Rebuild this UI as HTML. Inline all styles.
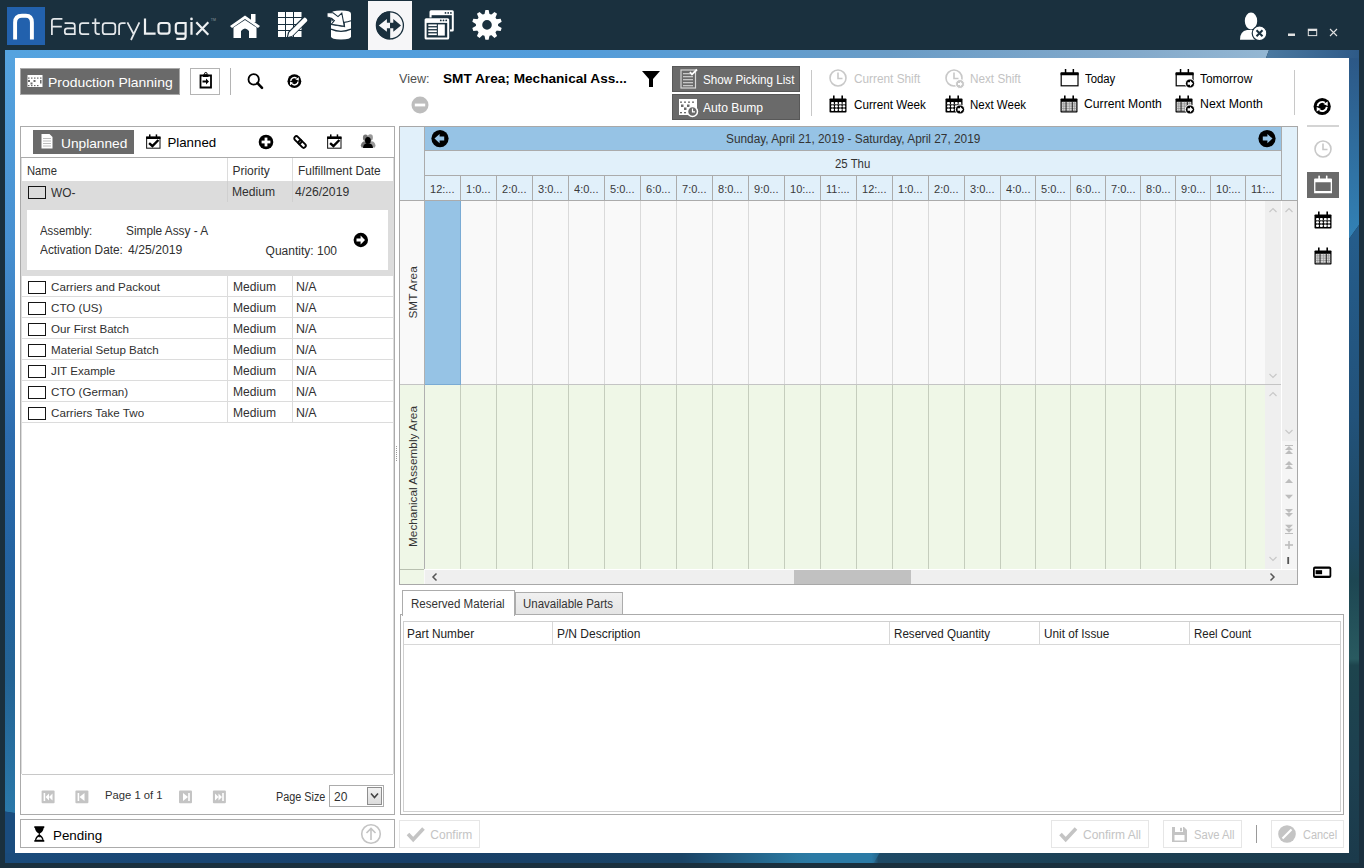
<!DOCTYPE html>
<html><head><meta charset="utf-8">
<style>
*{margin:0;padding:0;box-sizing:border-box}
html,body{width:1364px;height:868px;overflow:hidden}
body{background:#1a303e;font-family:"Liberation Sans",sans-serif;font-size:12px;color:#303030;position:relative}
.a{position:absolute}
.t{position:absolute;white-space:nowrap;line-height:1}
svg{position:absolute;overflow:visible}
</style></head><body>


<svg width="0" height="0" style="position:absolute">
 <defs>
  <g id="calO">
   <rect x="1.2" y="4.5" width="16.8" height="12.3" fill="none" stroke="#000" stroke-width="1.2"/>
   <rect x="0.6" y="3.3" width="18" height="3" rx="0.5" fill="#000"/>
   <rect x="4.8" y="0" width="1.5" height="5.5" fill="#000"/><rect x="12.6" y="0" width="1.5" height="5.5" fill="#000"/>
  </g>
  <g id="calW">
   <rect x="0.5" y="3.5" width="17" height="14" rx="0.8" fill="#000"/>
   <rect x="4" y="0.5" width="1.6" height="5" fill="#000"/><rect x="12.4" y="0.5" width="1.6" height="5" fill="#000"/>
   <g fill="#fff">
    <rect x="2" y="7" width="3" height="2.3" rx="1"/><rect x="5.9" y="7" width="3" height="2.3" rx="1"/><rect x="9.8" y="7" width="3" height="2.3" rx="1"/><rect x="13.5" y="7" width="2.8" height="2.3" rx="1"/>
    <rect x="2" y="10.2" width="3" height="2.3" rx="1"/><rect x="5.9" y="10.2" width="3" height="2.3" rx="1"/><rect x="9.8" y="10.2" width="3" height="2.3" rx="1"/><rect x="13.5" y="10.2" width="2.8" height="2.3" rx="1"/>
    <rect x="2" y="13.4" width="3" height="2.5" rx="1"/><rect x="5.9" y="13.4" width="3" height="2.5" rx="1"/><rect x="9.8" y="13.4" width="3" height="2.5" rx="1"/><rect x="13.5" y="13.4" width="2.8" height="2.5" rx="1"/>
    <rect x="1.7" y="9.6" width="14.6" height="0.4" opacity="0.6"/>
   </g>
  </g>
  <g id="calM">
   <rect x="0.5" y="3.5" width="17" height="14" rx="0.8" fill="#000"/>
   <rect x="4" y="0.5" width="1.6" height="5" fill="#000"/><rect x="12.4" y="0.5" width="1.6" height="5" fill="#000"/>
   <rect x="1.7" y="6.8" width="14.6" height="9.5" fill="#d4d4d4"/>
   <g fill="#888">
    <rect x="1.7" y="8.6" width="14.6" height="0.6"/><rect x="1.7" y="10.8" width="14.6" height="0.6"/><rect x="1.7" y="13" width="14.6" height="0.6"/><rect x="1.7" y="15" width="14.6" height="0.6"/>
    <rect x="3.6" y="6.8" width="0.5" height="9.5"/><rect x="9.2" y="6.8" width="0.5" height="9.5"/><rect x="14" y="6.8" width="0.5" height="9.5"/>
   </g>
   <rect x="5.6" y="6.8" width="0.9" height="9.5" fill="#111"/><rect x="11.8" y="6.8" width="0.9" height="9.5" fill="#111"/>
  </g>
  <g id="arr">
   <circle cx="15" cy="14.5" r="4.6" fill="#000" stroke="#fff" stroke-width="1"/>
   <path d="M12.6 13.3 H15 V11.5 L18 14.5 L15 17.5 V15.7 H12.6 Z" fill="#fff"/>
  </g>
  <g id="clk">
   <circle cx="9" cy="9" r="8" fill="none" stroke="#c8c8c8" stroke-width="1.6"/>
   <path d="M9 3.5 V9.5 H13.5" fill="none" stroke="#c8c8c8" stroke-width="1.6"/>
  </g>
  <g id="sync">
   <circle r="8.6" fill="#000"/>
   <path d="M-4.6 -0.4 A4.6 4.6 0 0 1 2.6 -3.8 M4.6 0.4 A4.6 4.6 0 0 1 -2.6 3.8" fill="none" stroke="#fff" stroke-width="1.9"/>
   <path d="M5.5 -5 L5.5 -0.5 L1.2 -2.4 Z M-5.5 5 L-5.5 0.5 L-1.2 2.4 Z" fill="#fff"/>
  </g>
 </defs>
</svg>

<!-- HEADER -->
<div class="a" style="left:7px;top:7px;width:38px;height:38px;background:#2261ad"></div>
<svg style="left:7px;top:7px" width="38" height="38"><path d="M8.1 32.6 V15.5 Q8.1 8.7 15 8.7 H18.9 Q24.9 8.7 24.9 15.5 V32.6" fill="none" stroke="#fff" stroke-width="3.9"/></svg>
<svg style="left:0;top:0" width="225" height="45">
 <g fill="none" stroke="#e4e7ea" stroke-width="1.75">
  <path d="M51.9 35 V21 Q51.9 18.9 54 18.9 H62.4 M51.9 26.5 H61.8"/>
  <path d="M64.6 23.1 H72.3 Q74.8 23.1 74.8 25.6 V35 M74.8 28.4 H67.2 Q64.8 28.4 64.8 30.8 V31.9 Q64.8 34.2 67.2 34.2 H74.8"/>
  <path d="M89.2 23.1 H82.4 Q79.9 23.1 79.9 25.8 V31.5 Q79.9 34.2 82.4 34.2 H89.2"/>
  <path d="M95.4 18.6 V31.6 Q95.4 34.2 98 34.2 H99.8 M91.9 23.1 H99.8"/>
  <path d="M105.3 23.1 H112.6 Q115.3 23.1 115.3 26 V31.4 Q115.3 34.2 112.6 34.2 H105.3 Q102.7 34.2 102.7 31.4 V26 Q102.7 23.1 105.3 23.1 Z"/>
  <path d="M119.1 35 V26 Q119.1 23.1 122 23.1 H125.6"/>
  <path d="M127.4 22.3 L133.6 34 M139.4 22.3 L131 40"/>
 </g>
 <g fill="none" stroke="#eef0f2" stroke-width="2.2">
  <path d="M145 18.6 V33.6 H155.6"/>
  <path d="M161 23 H167 Q169.5 23 169.5 25.6 V31 Q169.5 33.6 167 33.6 H161 Q158.5 33.6 158.5 31 V25.6 Q158.5 23 161 23 Z"/>
  <path d="M178.4 23 H185.6 V36.4 Q185.6 38.9 183 38.9 H176.3 M185.6 33.6 H178.4 Q175.8 33.6 175.8 31 V25.6 Q175.8 23 178.4 23"/>
  <path d="M191.5 22 V34.7 M196.3 22.3 L208.3 34.7 M208.3 22.3 L196.3 34.7"/>
 </g>
 <circle cx="191.5" cy="18.9" r="1.35" fill="#eef0f2"/>
 <text x="210.8" y="20.5" font-family="Liberation Sans" font-size="3.5" fill="#8d979f">TM</text>
</svg>

<!-- selected nav tab -->
<div class="a" style="left:368px;top:1px;width:44px;height:49px;background:#f6f6f8"></div>


<!-- nav icons -->
<svg style="left:0;top:0" width="520" height="50">
 <!-- home -->
 <path d="M230 26 L245 15.5 L260 26 L258 28 L245 19 L232 28 Z" fill="#fff"/>
 <rect x="251" y="14" width="4.5" height="8" fill="#fff"/>
 <path d="M233.5 27.5 L245 20 L256.5 27.5 V38 H249 V31 Q245 26 241 31 V38 H233.5 Z" fill="#fff"/>
 <!-- grid edit -->
 <g fill="#fff">
  <rect x="278" y="12" width="7" height="5"/><rect x="286" y="12" width="7" height="5"/><rect x="294" y="12" width="7.5" height="5"/>
  <rect x="278" y="18" width="7" height="6"/><rect x="286" y="18" width="7" height="6"/><rect x="294" y="18" width="7.5" height="6"/>
  <rect x="278" y="25" width="7" height="5"/><rect x="286" y="25" width="7" height="5"/><rect x="294" y="25" width="7.5" height="5"/>
  <rect x="278" y="31" width="7" height="6"/><rect x="286" y="31" width="7" height="6"/><rect x="294" y="31" width="7.5" height="6"/>
 </g>
 <path d="M286.5 38.5 L288 32 L303 17 Q304.8 15.3 306.5 17 L307.8 18.3 Q309.4 20 307.8 21.6 L292.8 36.6 Z" fill="#1a303e"/>
 <path d="M288 37 L289.2 32.6 L303.6 18.2 Q304.8 17 306 18.2 L306.8 19 Q308 20.2 306.8 21.4 L292.4 35.8 Z" fill="#fff"/>
 <!-- database -->
 <path d="M331 13.5 Q331 10.4 341 10.4 Q351 10.4 351 13.5 V36.5 Q351 39.4 341 39.4 Q331 39.4 331 36.5 Z" fill="#fff"/>
 <path d="M331 29.2 Q341 33.5 351 29.2" fill="none" stroke="#1a303e" stroke-width="1.4"/>
 <path d="M331 24.4 L344.5 26.6 L344 22.3 Q348 22 351 20.8" fill="none" stroke="#1a303e" stroke-width="1.2"/>
 <path d="M327 12.6 L333 12.8 L338 16.6 L341.8 13 L344.3 26.4 L331.4 24.2 L334.3 20.6 Q332 19.5 331.5 18.5 Q329 17 327 17 Z" fill="#fff" stroke="#1a303e" stroke-width="1.1" stroke-linejoin="miter"/>
 <path d="M331.2 17.5 L333.8 19.6 L331.5 21.8 Z" fill="#1a303e"/>
 <!-- selected tab icon -->
 <circle cx="389.9" cy="25.4" r="13.5" fill="#f6f6f8" stroke="#1a303e" stroke-width="1.3"/>
 <path d="M390.2 11.3 A14.1 14.1 0 0 0 390.2 39.5 Z" fill="#1a303e"/>
 <path d="M378.8 25.4 L386.9 19 V22.7 H390.2 V28.2 H386.9 V31.8 Z" fill="#f6f6f8"/>
 <path d="M401 25.4 L393.3 19 V22.7 H390 V28.2 H393.3 V31.8 Z" fill="#1a303e"/>
 <!-- windows -->
 <rect x="429.5" y="10.2" width="24.3" height="21.2" rx="1.5" fill="#fff"/>
 <rect x="431.6" y="15.2" width="20.2" height="14.2" fill="#1a303e"/>
 <g fill="#1a303e"><circle cx="445.5" cy="12.9" r="0.9"/><circle cx="448.2" cy="12.9" r="0.9"/><circle cx="450.9" cy="12.9" r="0.9"/></g>
 <rect x="423.8" y="17.4" width="26.2" height="22.9" rx="1.8" fill="#1a303e"/>
 <rect x="424.6" y="18.2" width="24.6" height="21.3" rx="1.5" fill="#fff"/>
 <rect x="426.6" y="22.9" width="20.6" height="14.6" fill="#1a303e"/>
 <g fill="#1a303e"><circle cx="440.8" cy="20.4" r="0.9"/><circle cx="443.5" cy="20.4" r="0.9"/><circle cx="446.2" cy="20.4" r="0.9"/></g>
 <g fill="#fff"><rect x="428.3" y="24.4" width="8.5" height="1.7"/><rect x="428.3" y="27.4" width="8.5" height="1.7"/><rect x="428.3" y="30.4" width="8.5" height="1.7"/><rect x="428.3" y="33.4" width="8.5" height="1.7"/><rect x="437.9" y="24.4" width="6.9" height="11.2"/></g>
 <!-- gear -->
 <path d="M484.30 14.90 L485.40 10.00 L488.60 10.00 L489.70 14.90 Z M490.69 15.22 L494.46 11.91 L497.05 13.79 L495.06 18.40 Z M495.68 19.24 L500.68 18.77 L501.67 21.82 L497.34 24.38 Z M497.34 25.42 L501.67 27.98 L500.68 31.03 L495.68 30.56 Z M495.06 31.40 L497.05 36.01 L494.46 37.89 L490.69 34.58 Z M489.70 34.90 L488.60 39.80 L485.40 39.80 L484.30 34.90 Z M483.31 34.58 L479.54 37.89 L476.95 36.01 L478.94 31.40 Z M478.32 30.56 L473.32 31.03 L472.33 27.98 L476.66 25.42 Z M476.66 24.38 L472.33 21.82 L473.32 18.77 L478.32 19.24 Z M478.94 18.40 L476.95 13.79 L479.54 11.91 L483.31 15.22 Z " fill="#fff"/>
 <circle cx="487" cy="24.9" r="7.95" fill="none" stroke="#fff" stroke-width="6.3"/>
</svg>
<!-- window controls -->
<svg style="left:1230px;top:0" width="134" height="50">
 <ellipse cx="21" cy="21" rx="6.2" ry="8.4" fill="#fff"/>
 <path d="M10 39.8 Q10 31 17 30 L21 30 L25 30 Q30 31 30 39.8 Z" fill="#fff"/>
 <circle cx="29.5" cy="33.3" r="7.3" fill="#fff" stroke="#1a303e" stroke-width="1.2"/>
 <path d="M26.5 30.3 L32.5 36.3 M32.5 30.3 L26.5 36.3" stroke="#1a303e" stroke-width="2"/>
 <rect x="58" y="33.5" width="7" height="2.5" fill="#e2e2e2"/>
 <rect x="78.3" y="29.2" width="8.4" height="6.4" fill="none" stroke="#e2e2e2" stroke-width="1"/>
 <rect x="78" y="29" width="9" height="2" fill="#e2e2e2"/>
 <path d="M100 29 L107 36 M107 29 L100 36" stroke="#e2e2e2" stroke-width="1.1"/>
</svg>

<!-- FRAME -->
<svg style="left:0;top:0" width="1364" height="868">
 <defs>
  <linearGradient id="gt1" x1="5" x2="1269" y1="0" y2="0" gradientUnits="userSpaceOnUse">
   <stop offset="0" stop-color="#55a3df"/><stop offset="0.45" stop-color="#529cda"/><stop offset="0.7" stop-color="#6a9cc6"/><stop offset="0.9" stop-color="#84aacb"/><stop offset="1" stop-color="#94b7d3"/>
  </linearGradient>
  <linearGradient id="gt2" x1="1266" x2="1359" y1="0" y2="0" gradientUnits="userSpaceOnUse">
   <stop offset="0" stop-color="#4b79a0"/><stop offset="1" stop-color="#2e5a88"/>
  </linearGradient>
  <linearGradient id="gr1" x1="0" x2="0" y1="50" y2="239" gradientUnits="userSpaceOnUse">
   <stop offset="0" stop-color="#2c5684"/><stop offset="1" stop-color="#3282b6"/>
  </linearGradient>
  <linearGradient id="gr2" x1="0" x2="0" y1="225" y2="863" gradientUnits="userSpaceOnUse">
   <stop offset="0" stop-color="#255d8c"/><stop offset="0.3" stop-color="#22527a"/><stop offset="0.5" stop-color="#1e4860"/><stop offset="0.556" stop-color="#1d4652"/><stop offset="0.68" stop-color="#295a60"/><stop offset="0.69" stop-color="#1d444d"/><stop offset="0.85" stop-color="#1d4050"/><stop offset="1" stop-color="#1b3a4b"/>
  </linearGradient>
  <linearGradient id="gl1" x1="0" x2="0" y1="58" y2="812" gradientUnits="userSpaceOnUse">
   <stop offset="0" stop-color="#55a3df"/><stop offset="0.25" stop-color="#468fd0"/><stop offset="0.5" stop-color="#2c6cae"/><stop offset="0.68" stop-color="#2262a0"/><stop offset="0.82" stop-color="#236394"/><stop offset="1" stop-color="#2a78a9"/>
  </linearGradient>
  <linearGradient id="gb" x1="5" x2="1359" y1="0" y2="0" gradientUnits="userSpaceOnUse">
   <stop offset="0" stop-color="#1a4b7b"/><stop offset="0.3" stop-color="#183f68"/><stop offset="0.5" stop-color="#1a4466"/><stop offset="0.585" stop-color="#2a78a0"/><stop offset="0.6" stop-color="#2c7ba6"/><stop offset="0.64" stop-color="#2c7aa5"/><stop offset="0.645" stop-color="#1e4a66"/><stop offset="0.8" stop-color="#1c4054"/><stop offset="1" stop-color="#1b3a4b"/>
  </linearGradient>
 </defs>
 <path d="M5 50 H1269 L1266 58 H5 Z" fill="url(#gt1)"/>
 <path d="M1269 50 H1359 V58 H1266 Z" fill="url(#gt2)"/>
 <path d="M1349 58 H1359 V225 L1349 239 Z" fill="url(#gr1)"/>
 <path d="M1349 239 L1359 225 V863 H1349 Z" fill="url(#gr2)"/>
 <path d="M5 58 H15 V813 L5 811.5 Z" fill="#2a76a8"/>
 <path d="M5 58 H15 V813 L5 811.5 Z" fill="url(#gl1)"/>
 <path d="M5 811.5 L15 813 V853 H5 Z" fill="#1a4c7e"/>
 <path d="M5 853 H1349 V863 H5 Z" fill="url(#gb)"/>
 <path d="M804.5 863 L814 853 H879.6 L873.7 863 Z" fill="#2c7aa5" opacity="0.6"/>
</svg>
<div class="a" style="left:15px;top:58px;width:1334px;height:795px;background:#fff"></div>


<!-- TOOLBAR -->
<div class="a" style="left:20px;top:68px;width:160px;height:27px;background:#6a6a6a;border:1px solid #a8a8a8"></div>
<svg style="left:27px;top:75px" width="16" height="13">
 <rect x="0.5" y="0" width="15" height="12" fill="#fff"/>
 <g fill="#6a6a6a">
  <rect x="1" y="2.5" width="1.5" height="1.2"/><rect x="4" y="2.5" width="1.5" height="1.2"/><rect x="7" y="2.5" width="1.5" height="1.2"/><rect x="10" y="2.5" width="1.5" height="1.2"/><rect x="13" y="2.5" width="1.5" height="1.2"/>
  <rect x="1" y="10" width="1.5" height="1.2"/><rect x="4" y="10" width="1.5" height="1.2"/><rect x="7" y="10" width="1.5" height="1.2"/><rect x="10" y="10" width="1.5" height="1.2"/>
  <rect x="1" y="5" width="2" height="2"/><rect x="6.5" y="5" width="2" height="2"/><rect x="3.5" y="7.5" width="2" height="2"/><rect x="13" y="5" width="1.5" height="3.5"/>
 </g>
</svg>
<div class="t" style="left:48.20px;top:75.63px;font-size:13.2px;color:#fff;transform:scaleX(1.056);transform-origin:0 0">Production Planning</div>
<div class="a" style="left:190px;top:68px;width:30px;height:27px;border:1px solid #b4b4b4;background:#fff"></div>
<svg style="left:199px;top:72px" width="14" height="18">
 <path d="M1.5 3.5 H12 V15.5 H1.5 Z" fill="none" stroke="#000" stroke-width="1.8"/>
 <path d="M4 2.5 H9.5 V5 H4 Z" fill="#000"/><circle cx="6.8" cy="1.8" r="1.3" fill="none" stroke="#000" stroke-width="1"/>
 <path d="M3.5 8.5 H7 V6.5 L10 9.5 L7 12.5 V10.5 H3.5 Z" fill="#000"/>
</svg>
<div class="a" style="left:230px;top:68px;width:1px;height:27px;background:#b4b4b4"></div>
<svg style="left:244px;top:70px" width="22" height="22">
 <circle cx="9.7" cy="9.4" r="5.2" fill="none" stroke="#000" stroke-width="1.8"/>
 <path d="M13.5 13.2 L18 17.8" stroke="#000" stroke-width="2.6" stroke-linecap="round"/>
</svg>
<svg style="left:280px;top:67px" width="30" height="30"><use href="#sync" transform="translate(14.4 14.2) scale(0.8)"/></svg>

<div class="t" style="left:399.10px;top:71.56px;font-size:13.4px;color:#505050;transform:scaleX(0.939);transform-origin:0 0">View:</div>
<div class="t" style="left:443.40px;top:72.37px;font-size:13.5px;font-weight:bold;color:#000;transform:scaleX(1.009);transform-origin:0 0">SMT Area; Mechanical Ass...</div>
<svg style="left:641px;top:70px" width="20" height="18">
 <path d="M1 1 H19 L12 9 V17 L8 17 V9 Z" fill="#000"/>
</svg>
<svg style="left:410px;top:95px" width="20" height="20">
 <circle cx="10" cy="10" r="8.5" fill="#bdbdbd"/>
 <rect x="4.8" y="8.6" width="10.4" height="2.8" fill="#fff"/>
</svg>

<div class="a" style="left:672px;top:65.5px;width:128px;height:26px;background:#6a6a6a;border:1px solid #585858"></div>
<div class="a" style="left:672px;top:94px;width:128px;height:25.5px;background:#6a6a6a;border:1px solid #585858"></div>
<svg style="left:680px;top:69px" width="18" height="20">
 <rect x="1" y="1" width="14.5" height="18" fill="none" stroke="#d8d8d8" stroke-width="1.2"/>
 <g fill="#c8c8c8"><rect x="3" y="4" width="10" height="1.3"/><rect x="3" y="7" width="10" height="1.3"/><rect x="3" y="10" width="10" height="1.3"/><rect x="3" y="13" width="10" height="1.3"/><rect x="3" y="16" width="10" height="1.3"/></g>
 <path d="M10 3 L12 5.5 L17 0.5" fill="none" stroke="#fff" stroke-width="1.8"/>
</svg>
<div class="t" style="left:703.10px;top:73.64px;font-size:12.0px;color:#fff;transform:scaleX(0.972);transform-origin:0 0">Show Picking List</div>
<svg style="left:678px;top:98px" width="22" height="22">
 <rect x="1" y="1" width="18" height="16" fill="#fff"/>
 <g fill="#6a6a6a">
  <rect x="2" y="3.5" width="2" height="1.3"/><rect x="6" y="3.5" width="2" height="1.3"/><rect x="10" y="3.5" width="2" height="1.3"/><rect x="14" y="3.5" width="2" height="1.3"/>
  <rect x="3" y="6.5" width="2.5" height="2.5"/><rect x="9" y="6.5" width="2.5" height="2.5"/><rect x="6" y="9.5" width="2.5" height="2.5"/>
  <rect x="2" y="14" width="2" height="1.3"/><rect x="6" y="14" width="2" height="1.3"/>
 </g>
 <circle cx="14.5" cy="13.5" r="5" fill="#6a6a6a" stroke="#fff" stroke-width="1.5"/>
 <path d="M14.5 10.5 V13.8 H17" fill="none" stroke="#fff" stroke-width="1.2"/>
</svg>
<div class="t" style="left:703.00px;top:101.64px;font-size:12.0px;color:#fff;transform:scaleX(1.011);transform-origin:0 0">Auto Bump</div>
<div class="a" style="left:811px;top:70px;width:1px;height:46px;background:#c8c8c8"></div>
<div class="a" style="left:1294px;top:70px;width:1px;height:45px;background:#c8c8c8"></div>


<!-- TIME NAV -->
<svg style="left:829px;top:69px" width="20" height="20"><use href="#clk"/></svg>
<div class="t" style="left:853.50px;top:72.84px;font-size:12.0px;color:#c3c3c3;transform:scaleX(0.984);transform-origin:0 0">Current Shift</div>
<svg style="left:944.5px;top:69px" width="22" height="22"><use href="#clk"/><circle cx="15" cy="15" r="4.5" fill="#c8c8c8" stroke="#fff" stroke-width="1"/><path d="M13 14 H15 V12.5 L17.5 15 L15 17.5 V16 H13 Z" fill="#fff"/></svg>
<div class="t" style="left:969.50px;top:72.84px;font-size:12.0px;color:#c3c3c3;transform:scaleX(0.978);transform-origin:0 0">Next Shift</div>

<svg style="left:829px;top:94.5px" width="20" height="20"><use href="#calW"/></svg>
<div class="t" style="left:853.50px;top:98.74px;font-size:12.0px;color:#000;transform:scaleX(0.973);transform-origin:0 0">Current Week</div>
<svg style="left:944.5px;top:94.5px" width="22" height="22"><use href="#calW"/><use href="#arr"/></svg>
<div class="t" style="left:969.50px;top:98.74px;font-size:12.0px;color:#000;transform:scaleX(0.959);transform-origin:0 0">Next Week</div>

<svg style="left:1060px;top:68.5px" width="20" height="20"><use href="#calO"/></svg>
<div class="t" style="left:1084.60px;top:72.54px;font-size:12.0px;color:#000;transform:scaleX(0.946);transform-origin:0 0">Today</div>
<svg style="left:1060px;top:94.5px" width="20" height="20"><use href="#calM"/></svg>
<div class="t" style="left:1084.20px;top:98.24px;font-size:12.0px;color:#000;transform:scaleX(1.015);transform-origin:0 0">Current Month</div>
<svg style="left:1175px;top:68.5px" width="22" height="22"><use href="#calO"/><use href="#arr"/></svg>
<div class="t" style="left:1200.10px;top:72.54px;font-size:12.0px;color:#000;transform:scaleX(0.992);transform-origin:0 0">Tomorrow</div>
<svg style="left:1175px;top:94.5px" width="22" height="22"><use href="#calM"/><use href="#arr"/></svg>
<div class="t" style="left:1200.00px;top:98.24px;font-size:12.0px;color:#000;transform:scaleX(1.025);transform-origin:0 0">Next Month</div>

<svg style="left:1308px;top:92px" width="30" height="30"><use href="#sync" transform="translate(14.2 14.5)"/></svg>

<!-- RIGHT TOOLBAR -->
<div class="a" style="left:1307px;top:125px;width:32px;height:2px;background:#d4d4d4"></div>
<svg style="left:1314px;top:140px" width="20" height="20"><use href="#clk"/></svg>
<div class="a" style="left:1307px;top:172px;width:32px;height:26px;background:#6a6a6a"></div>
<svg style="left:1300px;top:165px" width="45" height="40">
 <path d="M14.1 14.3 Q14.1 13.6 15 13.6 H31.1 Q32 13.6 32 14.3 V28.2 H14.1 Z M15.4 17.3 V26 H30.7 V17.3 Z" fill="#fff" fill-rule="evenodd"/>
 <rect x="18.3" y="10.4" width="1.6" height="4.6" rx="0.6" fill="#fff"/><rect x="25.9" y="10.4" width="1.6" height="4.6" rx="0.6" fill="#fff"/>
</svg>
<svg style="left:1314px;top:211px" width="20" height="20"><use href="#calW"/></svg>
<svg style="left:1314px;top:247px" width="20" height="20"><use href="#calM"/></svg>
<svg style="left:1312px;top:566px" width="22" height="13">
 <rect x="1" y="0.6" width="18.3" height="11.3" rx="2" fill="#000"/>
 <rect x="2.8" y="2.8" width="14.7" height="6.9" fill="#fff"/>
 <rect x="3.6" y="4.2" width="6.5" height="4" fill="#000"/>
</svg>


<!-- LEFT PANEL -->
<div class="a" style="left:20px;top:126px;width:375px;height:689px;border:1px solid #ababab;background:#fff"></div>
<div class="a" style="left:33px;top:130px;width:101px;height:24px;background:#6a6a6a"></div>
<svg style="left:40px;top:133px" width="14" height="17">
 <path d="M1.5 1 H9.5 L12.5 4 V15.5 H1.5 Z" fill="#fff"/>
 <g fill="#bdbdbd"><rect x="3" y="5" width="8" height="1"/><rect x="3" y="7.5" width="8" height="1"/><rect x="3" y="10" width="8" height="1"/><rect x="3" y="12.5" width="8" height="1"/></g>
</svg>
<div class="t" style="left:60.50px;top:136.64px;font-size:13.3px;color:#fff;transform:scaleX(1.032);transform-origin:0 0">Unplanned</div>
<svg style="left:146px;top:134.4px" width="17" height="17">
 <rect x="0.6" y="3.6" width="13.4" height="10.6" fill="none" stroke="#222" stroke-width="1.1"/>
 <rect x="0.1" y="2.4" width="14.4" height="2.6" fill="#000"/>
 <rect x="3" y="0.4" width="1.5" height="3" fill="#000"/><rect x="9.7" y="0.4" width="1.5" height="3" fill="#000"/>
 <path d="M3.1 9.2 L6.4 12 L12.4 6" fill="none" stroke="#000" stroke-width="2.4"/>
</svg>
<div class="t" style="left:167.40px;top:136.24px;font-size:13.3px;color:#000">Planned</div>
<svg style="left:258px;top:134px" width="16" height="16">
 <circle cx="8" cy="8" r="7.3" fill="#000"/>
 <rect x="6.6" y="3.6" width="2.8" height="8.8" fill="#fff"/><rect x="3.6" y="6.6" width="8.8" height="2.8" fill="#fff"/>
</svg>
<svg style="left:288px;top:130px" width="24" height="24">
 <g fill="none" stroke="#000" stroke-width="1.9">
  <rect x="5.6" y="7.8" width="8.6" height="4.2" rx="2.1" transform="rotate(45 9.9 9.9)"/>
  <rect x="9.8" y="12" width="8.6" height="4.2" rx="2.1" transform="rotate(45 14.1 14.1)"/>
 </g>
</svg>
<svg style="left:327px;top:134.4px" width="17" height="17">
 <rect x="0.6" y="3.6" width="13.4" height="10.6" fill="none" stroke="#222" stroke-width="1.1"/>
 <rect x="0.1" y="2.4" width="14.4" height="2.6" fill="#000"/>
 <rect x="3" y="0.4" width="1.5" height="3" fill="#000"/><rect x="9.7" y="0.4" width="1.5" height="3" fill="#000"/>
 <path d="M3.1 9.2 L6.4 12 L12.4 6" fill="none" stroke="#000" stroke-width="2.4"/>
</svg>
<svg style="left:360px;top:134px" width="17" height="16">
 <ellipse cx="5.5" cy="3.8" rx="2.6" ry="3.2" fill="#777"/>
 <ellipse cx="10.3" cy="3.4" rx="2.6" ry="3.2" fill="#999"/>
 <path d="M0.8 11.5 Q1.5 7.5 5 7.3 L8 8 L6 13.5 H1.5 Z" fill="#777"/>
 <path d="M15.5 11.5 Q15 7.5 11.5 7.3 L9 8 L11 13.5 H15 Z" fill="#999"/>
 <ellipse cx="7.9" cy="6.5" rx="2.9" ry="3.6" fill="#000"/>
 <path d="M3 14 Q3.2 10 6.5 9.6 H9.5 Q12.8 10 13 14 Z" fill="#000"/>
</svg>
<div class="a" style="left:21px;top:157px;width:373px;height:1px;background:#ababab"></div>
<!-- header -->
<div class="t" style="left:26.90px;top:164.74px;font-size:12.0px;transform:scaleX(0.936);transform-origin:0 0">Name</div>
<div class="t" style="left:232.40px;top:164.94px;font-size:12.0px;">Priority</div>
<div class="t" style="left:297.50px;top:164.94px;font-size:12.0px;transform:scaleX(0.992);transform-origin:0 0">Fulfillment Date</div>
<div class="a" style="left:227px;top:158px;width:1px;height:23px;background:#dcdcdc"></div>
<div class="a" style="left:292px;top:158px;width:1px;height:23px;background:#dcdcdc"></div>
<div class="a" style="left:21px;top:158px;width:1px;height:616px;background:#dcdcdc"></div>
<div class="a" style="left:393px;top:158px;width:1px;height:616px;background:#dcdcdc"></div>
<!-- selected row -->
<div class="a" style="left:22px;top:181px;width:371px;height:95px;background:#dcdcdc"></div>
<div class="a" style="left:227px;top:181px;width:1px;height:21px;background:#d0d0d0"></div>
<div class="a" style="left:292px;top:181px;width:1px;height:21px;background:#d0d0d0"></div>
<div class="a" style="left:28px;top:186px;width:18px;height:13px;border:1.8px solid #151515"></div>
<div class="t" style="left:51.30px;top:186.64px;font-size:12.0px;transform:scaleX(0.989);transform-origin:0 0">WO-</div>
<div class="t" style="left:232.40px;top:186.44px;font-size:12.0px;transform:scaleX(1.010);transform-origin:0 0">Medium</div>
<div class="t" style="left:294.80px;top:186.44px;font-size:12.0px;transform:scaleX(1.015);transform-origin:0 0">4/26/2019</div>
<div class="a" style="left:27px;top:210px;width:361px;height:60px;background:#fff"></div>
<div class="t" style="left:39.50px;top:224.64px;font-size:12.0px;transform:scaleX(0.944);transform-origin:0 0">Assembly:</div>
<div class="t" style="left:126.10px;top:224.64px;font-size:12.0px;transform:scaleX(0.986);transform-origin:0 0">Simple Assy - A</div>
<div class="t" style="left:39.50px;top:244.44px;font-size:12.0px;transform:scaleX(0.986);transform-origin:0 0">Activation Date:</div>
<div class="t" style="left:128.00px;top:244.44px;font-size:12.0px;transform:scaleX(1.017);transform-origin:0 0">4/25/2019</div>
<div class="t" style="left:265.60px;top:244.74px;font-size:12.0px;">Quantity: 100</div>
<svg style="left:353px;top:232px" width="16" height="16">
 <circle cx="7.8" cy="8" r="7.2" fill="#000"/>
 <path d="M3.5 6.6 H7.6 V3.6 L12 8 L7.6 12.4 V9.4 H3.5 Z" fill="#fff"/>
</svg>
<div class="a" style="left:22px;top:296px;width:371px;height:1px;background:#dcdcdc"></div>
<div class="a" style="left:28px;top:281px;width:18px;height:13px;border:1.8px solid #151515"></div>
<div class="t" style="left:51.10px;top:281.18px;font-size:11.6px;">Carriers and Packout</div>
<div class="t" style="left:232.70px;top:280.84px;font-size:12.0px;transform:scaleX(1.006);transform-origin:0 0">Medium</div>
<div class="t" style="left:295.70px;top:280.84px;font-size:12.0px;transform:scaleX(1.028);transform-origin:0 0">N/A</div>
<div class="a" style="left:227px;top:276px;width:1px;height:20px;background:#dcdcdc"></div>
<div class="a" style="left:292px;top:276px;width:1px;height:20px;background:#dcdcdc"></div>
<div class="a" style="left:22px;top:317px;width:371px;height:1px;background:#dcdcdc"></div>
<div class="a" style="left:28px;top:302px;width:18px;height:13px;border:1.8px solid #151515"></div>
<div class="t" style="left:51.10px;top:302.18px;font-size:11.6px;">CTO (US)</div>
<div class="t" style="left:232.70px;top:301.84px;font-size:12.0px;transform:scaleX(1.006);transform-origin:0 0">Medium</div>
<div class="t" style="left:295.70px;top:301.84px;font-size:12.0px;transform:scaleX(1.028);transform-origin:0 0">N/A</div>
<div class="a" style="left:227px;top:297px;width:1px;height:20px;background:#dcdcdc"></div>
<div class="a" style="left:292px;top:297px;width:1px;height:20px;background:#dcdcdc"></div>
<div class="a" style="left:22px;top:338px;width:371px;height:1px;background:#dcdcdc"></div>
<div class="a" style="left:28px;top:323px;width:18px;height:13px;border:1.8px solid #151515"></div>
<div class="t" style="left:51.10px;top:323.18px;font-size:11.6px;">Our First Batch</div>
<div class="t" style="left:232.70px;top:322.84px;font-size:12.0px;transform:scaleX(1.006);transform-origin:0 0">Medium</div>
<div class="t" style="left:295.70px;top:322.84px;font-size:12.0px;transform:scaleX(1.028);transform-origin:0 0">N/A</div>
<div class="a" style="left:227px;top:318px;width:1px;height:20px;background:#dcdcdc"></div>
<div class="a" style="left:292px;top:318px;width:1px;height:20px;background:#dcdcdc"></div>
<div class="a" style="left:22px;top:359px;width:371px;height:1px;background:#dcdcdc"></div>
<div class="a" style="left:28px;top:344px;width:18px;height:13px;border:1.8px solid #151515"></div>
<div class="t" style="left:51.10px;top:344.18px;font-size:11.6px;">Material Setup Batch</div>
<div class="t" style="left:232.70px;top:343.84px;font-size:12.0px;transform:scaleX(1.006);transform-origin:0 0">Medium</div>
<div class="t" style="left:295.70px;top:343.84px;font-size:12.0px;transform:scaleX(1.028);transform-origin:0 0">N/A</div>
<div class="a" style="left:227px;top:339px;width:1px;height:20px;background:#dcdcdc"></div>
<div class="a" style="left:292px;top:339px;width:1px;height:20px;background:#dcdcdc"></div>
<div class="a" style="left:22px;top:380px;width:371px;height:1px;background:#dcdcdc"></div>
<div class="a" style="left:28px;top:365px;width:18px;height:13px;border:1.8px solid #151515"></div>
<div class="t" style="left:51.10px;top:365.18px;font-size:11.6px;">JIT Example</div>
<div class="t" style="left:232.70px;top:364.84px;font-size:12.0px;transform:scaleX(1.006);transform-origin:0 0">Medium</div>
<div class="t" style="left:295.70px;top:364.84px;font-size:12.0px;transform:scaleX(1.028);transform-origin:0 0">N/A</div>
<div class="a" style="left:227px;top:360px;width:1px;height:20px;background:#dcdcdc"></div>
<div class="a" style="left:292px;top:360px;width:1px;height:20px;background:#dcdcdc"></div>
<div class="a" style="left:22px;top:401px;width:371px;height:1px;background:#dcdcdc"></div>
<div class="a" style="left:28px;top:386px;width:18px;height:13px;border:1.8px solid #151515"></div>
<div class="t" style="left:51.10px;top:386.18px;font-size:11.6px;">CTO (German)</div>
<div class="t" style="left:232.70px;top:385.84px;font-size:12.0px;transform:scaleX(1.006);transform-origin:0 0">Medium</div>
<div class="t" style="left:295.70px;top:385.84px;font-size:12.0px;transform:scaleX(1.028);transform-origin:0 0">N/A</div>
<div class="a" style="left:227px;top:381px;width:1px;height:20px;background:#dcdcdc"></div>
<div class="a" style="left:292px;top:381px;width:1px;height:20px;background:#dcdcdc"></div>
<div class="a" style="left:22px;top:422px;width:371px;height:1px;background:#dcdcdc"></div>
<div class="a" style="left:28px;top:407px;width:18px;height:13px;border:1.8px solid #151515"></div>
<div class="t" style="left:51.10px;top:407.18px;font-size:11.6px;">Carriers Take Two</div>
<div class="t" style="left:232.70px;top:406.84px;font-size:12.0px;transform:scaleX(1.006);transform-origin:0 0">Medium</div>
<div class="t" style="left:295.70px;top:406.84px;font-size:12.0px;transform:scaleX(1.028);transform-origin:0 0">N/A</div>
<div class="a" style="left:227px;top:402px;width:1px;height:20px;background:#dcdcdc"></div>
<div class="a" style="left:292px;top:402px;width:1px;height:20px;background:#dcdcdc"></div>

<div class="a" style="left:22px;top:774px;width:371px;height:1px;background:#c8c8c8"></div>
<!-- pager -->
<svg style="left:40px;top:789px" width="190" height="16">
 <g fill="#c4c4c4">
  <rect x="1.6" y="1.6" width="13" height="12.6" rx="1"/><rect x="35.4" y="1.6" width="13" height="12.6" rx="1"/>
  <rect x="139" y="1.6" width="13" height="12.6" rx="1"/><rect x="172.9" y="1.6" width="13" height="12.6" rx="1"/>
 </g>
 <g fill="#fff">
  <rect x="3.6" y="4" width="1.6" height="8"/><path d="M5.5 8 L9 4.5 V11.5 Z M9 8 L12.5 4.5 V11.5 Z"/>
  <rect x="37.6" y="4" width="1.6" height="8"/><path d="M39.5 8 L44.5 4 V12 Z"/>
  <rect x="148.2" y="4" width="1.6" height="8"/><path d="M148 8 L143 4 V12 Z"/>
  <rect x="182.2" y="4" width="1.6" height="8"/><path d="M182 8 L178.5 4.5 V11.5 Z M178.5 8 L175 4.5 V11.5 Z"/>
 </g>
</svg>
<div class="t" style="left:104.60px;top:790.01px;font-size:11.8px;transform:scaleX(0.953);transform-origin:0 0">Page 1 of 1</div>
<div class="t" style="left:276.10px;top:790.74px;font-size:12.0px;transform:scaleX(0.903);transform-origin:0 0">Page Size</div>
<div class="a" style="left:329px;top:785px;width:55px;height:22px;border:1px solid #acacac;background:#fff"></div>
<div class="t" style="left:334px;top:790.6px;font-size:12px">20</div>
<div class="a" style="left:367px;top:787px;width:15px;height:18px;border:1px solid #8e8e8e;background:linear-gradient(#f2f2f2,#dcdcdc)"></div>
<svg style="left:368px;top:790px" width="14" height="12"><path d="M3 3.5 L6.5 7.5 L10 3.5" fill="none" stroke="#444" stroke-width="1.6"/></svg>
<!-- pending -->
<div class="a" style="left:20px;top:819px;width:375px;height:29px;border:1px solid #ababab;background:#fff"></div>
<svg style="left:34px;top:826px" width="12" height="17">
 <path d="M0.3 0.3 H10.3 V1.8 L9.6 2.2 Q9.3 5.5 5.8 7.6 V8.4 Q9.3 10.5 9.6 14 L10.3 14.3 V15.8 H0.3 V14.3 L1 14 Q1.3 10.5 4.8 8.4 V7.6 Q1.3 5.5 1 2.2 L0.3 1.8 Z" fill="#000"/>
 <path d="M2.2 13.8 Q2.8 11.6 5.3 10.6 Q7.8 11.6 8.4 13.8 Z" fill="#fff"/>
 <path d="M4.6 9.2 L5.3 12 L6 9.2 Z" fill="#000"/>
</svg>
<div class="t" style="left:52.50px;top:828.54px;font-size:13.3px;color:#000;transform:scaleX(1.006);transform-origin:0 0">Pending</div>
<svg style="left:360px;top:823px" width="22" height="22">
 <circle cx="11" cy="11" r="9.3" fill="none" stroke="#c4c4c4" stroke-width="1.6"/>
 <path d="M11 5.5 V17 M6.5 10 L11 5.5 L15.5 10" fill="none" stroke="#c4c4c4" stroke-width="1.6"/>
</svg>


<!-- SCHEDULER -->
<div class="a" style="left:399px;top:126px;width:899px;height:459px;border:1px solid #a8a8a8;background:#f9f9f9"></div>
<div class="a" style="left:400px;top:127px;width:897px;height:73px;background:#e1f0fa"></div>
<div class="a" style="left:425px;top:127px;width:856px;height:23px;background:#96c3e5"></div>
<div class="a" style="left:424px;top:127px;width:1px;height:442px;background:#ababab"></div>
<div class="a" style="left:1281px;top:127px;width:1px;height:74px;background:#ababab"></div>
<div class="a" style="left:425px;top:150px;width:856px;height:1px;background:#ababab"></div>
<div class="a" style="left:425px;top:175px;width:856px;height:1px;background:#ababab"></div>
<div class="a" style="left:400px;top:200px;width:897px;height:1px;background:#ababab"></div>
<div class="t" style="left:725.70px;top:133.04px;font-size:12.0px;color:#333;transform:scaleX(0.987);transform-origin:0 0">Sunday, April 21, 2019 - Saturday, April 27, 2019</div>
<div class="t" style="left:835.20px;top:157.54px;font-size:12.0px;color:#333;transform:scaleX(0.950);transform-origin:0 0">25 Thu</div>
<svg style="left:430px;top:129px" width="20" height="20">
 <circle cx="10" cy="9.6" r="8.6" fill="#000"/>
 <path d="M4.5 9.6 L9.6 5 V7.6 H14.2 V11.6 H9.6 V14.2 Z" fill="#96c3e5"/>
</svg>
<svg style="left:1257px;top:129px" width="20" height="20">
 <circle cx="10" cy="9.6" r="8.6" fill="#000"/>
 <path d="M15.5 9.6 L10.4 5 V7.6 H5.8 V11.6 H10.4 V14.2 Z" fill="#96c3e5"/>
</svg>
<!-- body -->
<div class="a" style="left:400px;top:385px;width:881px;height:184px;background:#eff7e7"></div>
<div class="a" style="left:425px;top:201px;width:35px;height:184px;background:#96c3e5"></div>
<div class="t" style="left:429.6px;top:182.6px;font-size:11.6px;color:#3a3a3a;transform:scaleX(0.95);transform-origin:0 0">12:...</div>
<div class="t" style="left:465.6px;top:182.6px;font-size:11.6px;color:#3a3a3a;transform:scaleX(0.95);transform-origin:0 0">1:0...</div>
<div class="a" style="left:460px;top:176px;width:1px;height:25px;background:#ababab"></div>
<div class="a" style="left:460px;top:201px;width:1px;height:184px;background:#dadada"></div>
<div class="a" style="left:460px;top:385px;width:1px;height:184px;background:#c5cdbd"></div>
<div class="t" style="left:501.6px;top:182.6px;font-size:11.6px;color:#3a3a3a;transform:scaleX(0.95);transform-origin:0 0">2:0...</div>
<div class="a" style="left:496px;top:176px;width:1px;height:25px;background:#ababab"></div>
<div class="a" style="left:496px;top:201px;width:1px;height:184px;background:#dadada"></div>
<div class="a" style="left:496px;top:385px;width:1px;height:184px;background:#c5cdbd"></div>
<div class="t" style="left:537.6px;top:182.6px;font-size:11.6px;color:#3a3a3a;transform:scaleX(0.95);transform-origin:0 0">3:0...</div>
<div class="a" style="left:532px;top:176px;width:1px;height:25px;background:#ababab"></div>
<div class="a" style="left:532px;top:201px;width:1px;height:184px;background:#dadada"></div>
<div class="a" style="left:532px;top:385px;width:1px;height:184px;background:#c5cdbd"></div>
<div class="t" style="left:573.6px;top:182.6px;font-size:11.6px;color:#3a3a3a;transform:scaleX(0.95);transform-origin:0 0">4:0...</div>
<div class="a" style="left:568px;top:176px;width:1px;height:25px;background:#ababab"></div>
<div class="a" style="left:568px;top:201px;width:1px;height:184px;background:#dadada"></div>
<div class="a" style="left:568px;top:385px;width:1px;height:184px;background:#c5cdbd"></div>
<div class="t" style="left:609.6px;top:182.6px;font-size:11.6px;color:#3a3a3a;transform:scaleX(0.95);transform-origin:0 0">5:0...</div>
<div class="a" style="left:604px;top:176px;width:1px;height:25px;background:#ababab"></div>
<div class="a" style="left:604px;top:201px;width:1px;height:184px;background:#dadada"></div>
<div class="a" style="left:604px;top:385px;width:1px;height:184px;background:#c5cdbd"></div>
<div class="t" style="left:645.6px;top:182.6px;font-size:11.6px;color:#3a3a3a;transform:scaleX(0.95);transform-origin:0 0">6:0...</div>
<div class="a" style="left:640px;top:176px;width:1px;height:25px;background:#ababab"></div>
<div class="a" style="left:640px;top:201px;width:1px;height:184px;background:#dadada"></div>
<div class="a" style="left:640px;top:385px;width:1px;height:184px;background:#c5cdbd"></div>
<div class="t" style="left:681.6px;top:182.6px;font-size:11.6px;color:#3a3a3a;transform:scaleX(0.95);transform-origin:0 0">7:0...</div>
<div class="a" style="left:676px;top:176px;width:1px;height:25px;background:#ababab"></div>
<div class="a" style="left:676px;top:201px;width:1px;height:184px;background:#dadada"></div>
<div class="a" style="left:676px;top:385px;width:1px;height:184px;background:#c5cdbd"></div>
<div class="t" style="left:717.6px;top:182.6px;font-size:11.6px;color:#3a3a3a;transform:scaleX(0.95);transform-origin:0 0">8:0...</div>
<div class="a" style="left:712px;top:176px;width:1px;height:25px;background:#ababab"></div>
<div class="a" style="left:712px;top:201px;width:1px;height:184px;background:#dadada"></div>
<div class="a" style="left:712px;top:385px;width:1px;height:184px;background:#c5cdbd"></div>
<div class="t" style="left:753.6px;top:182.6px;font-size:11.6px;color:#3a3a3a;transform:scaleX(0.95);transform-origin:0 0">9:0...</div>
<div class="a" style="left:748px;top:176px;width:1px;height:25px;background:#ababab"></div>
<div class="a" style="left:748px;top:201px;width:1px;height:184px;background:#dadada"></div>
<div class="a" style="left:748px;top:385px;width:1px;height:184px;background:#c5cdbd"></div>
<div class="t" style="left:789.6px;top:182.6px;font-size:11.6px;color:#3a3a3a;transform:scaleX(0.95);transform-origin:0 0">10:...</div>
<div class="a" style="left:784px;top:176px;width:1px;height:25px;background:#ababab"></div>
<div class="a" style="left:784px;top:201px;width:1px;height:184px;background:#dadada"></div>
<div class="a" style="left:784px;top:385px;width:1px;height:184px;background:#c5cdbd"></div>
<div class="t" style="left:825.6px;top:182.6px;font-size:11.6px;color:#3a3a3a;transform:scaleX(0.95);transform-origin:0 0">11:...</div>
<div class="a" style="left:820px;top:176px;width:1px;height:25px;background:#ababab"></div>
<div class="a" style="left:820px;top:201px;width:1px;height:184px;background:#dadada"></div>
<div class="a" style="left:820px;top:385px;width:1px;height:184px;background:#c5cdbd"></div>
<div class="t" style="left:861.6px;top:182.6px;font-size:11.6px;color:#3a3a3a;transform:scaleX(0.95);transform-origin:0 0">12:...</div>
<div class="a" style="left:856px;top:176px;width:1px;height:25px;background:#ababab"></div>
<div class="a" style="left:856px;top:201px;width:1px;height:184px;background:#dadada"></div>
<div class="a" style="left:856px;top:385px;width:1px;height:184px;background:#c5cdbd"></div>
<div class="t" style="left:897.6px;top:182.6px;font-size:11.6px;color:#3a3a3a;transform:scaleX(0.95);transform-origin:0 0">1:0...</div>
<div class="a" style="left:892px;top:176px;width:1px;height:25px;background:#ababab"></div>
<div class="a" style="left:892px;top:201px;width:1px;height:184px;background:#dadada"></div>
<div class="a" style="left:892px;top:385px;width:1px;height:184px;background:#c5cdbd"></div>
<div class="t" style="left:933.6px;top:182.6px;font-size:11.6px;color:#3a3a3a;transform:scaleX(0.95);transform-origin:0 0">2:0...</div>
<div class="a" style="left:928px;top:176px;width:1px;height:25px;background:#ababab"></div>
<div class="a" style="left:928px;top:201px;width:1px;height:184px;background:#dadada"></div>
<div class="a" style="left:928px;top:385px;width:1px;height:184px;background:#c5cdbd"></div>
<div class="t" style="left:969.6px;top:182.6px;font-size:11.6px;color:#3a3a3a;transform:scaleX(0.95);transform-origin:0 0">3:0...</div>
<div class="a" style="left:964px;top:176px;width:1px;height:25px;background:#ababab"></div>
<div class="a" style="left:964px;top:201px;width:1px;height:184px;background:#dadada"></div>
<div class="a" style="left:964px;top:385px;width:1px;height:184px;background:#c5cdbd"></div>
<div class="t" style="left:1005.6px;top:182.6px;font-size:11.6px;color:#3a3a3a;transform:scaleX(0.95);transform-origin:0 0">4:0...</div>
<div class="a" style="left:1000px;top:176px;width:1px;height:25px;background:#ababab"></div>
<div class="a" style="left:1000px;top:201px;width:1px;height:184px;background:#dadada"></div>
<div class="a" style="left:1000px;top:385px;width:1px;height:184px;background:#c5cdbd"></div>
<div class="t" style="left:1040.6px;top:182.6px;font-size:11.6px;color:#3a3a3a;transform:scaleX(0.95);transform-origin:0 0">5:0...</div>
<div class="a" style="left:1035px;top:176px;width:1px;height:25px;background:#ababab"></div>
<div class="a" style="left:1035px;top:201px;width:1px;height:184px;background:#dadada"></div>
<div class="a" style="left:1035px;top:385px;width:1px;height:184px;background:#c5cdbd"></div>
<div class="t" style="left:1075.6px;top:182.6px;font-size:11.6px;color:#3a3a3a;transform:scaleX(0.95);transform-origin:0 0">6:0...</div>
<div class="a" style="left:1070px;top:176px;width:1px;height:25px;background:#ababab"></div>
<div class="a" style="left:1070px;top:201px;width:1px;height:184px;background:#dadada"></div>
<div class="a" style="left:1070px;top:385px;width:1px;height:184px;background:#c5cdbd"></div>
<div class="t" style="left:1110.6px;top:182.6px;font-size:11.6px;color:#3a3a3a;transform:scaleX(0.95);transform-origin:0 0">7:0...</div>
<div class="a" style="left:1105px;top:176px;width:1px;height:25px;background:#ababab"></div>
<div class="a" style="left:1105px;top:201px;width:1px;height:184px;background:#dadada"></div>
<div class="a" style="left:1105px;top:385px;width:1px;height:184px;background:#c5cdbd"></div>
<div class="t" style="left:1145.6px;top:182.6px;font-size:11.6px;color:#3a3a3a;transform:scaleX(0.95);transform-origin:0 0">8:0...</div>
<div class="a" style="left:1140px;top:176px;width:1px;height:25px;background:#ababab"></div>
<div class="a" style="left:1140px;top:201px;width:1px;height:184px;background:#dadada"></div>
<div class="a" style="left:1140px;top:385px;width:1px;height:184px;background:#c5cdbd"></div>
<div class="t" style="left:1180.6px;top:182.6px;font-size:11.6px;color:#3a3a3a;transform:scaleX(0.95);transform-origin:0 0">9:0...</div>
<div class="a" style="left:1175px;top:176px;width:1px;height:25px;background:#ababab"></div>
<div class="a" style="left:1175px;top:201px;width:1px;height:184px;background:#dadada"></div>
<div class="a" style="left:1175px;top:385px;width:1px;height:184px;background:#c5cdbd"></div>
<div class="t" style="left:1215.6px;top:182.6px;font-size:11.6px;color:#3a3a3a;transform:scaleX(0.95);transform-origin:0 0">10:...</div>
<div class="a" style="left:1210px;top:176px;width:1px;height:25px;background:#ababab"></div>
<div class="a" style="left:1210px;top:201px;width:1px;height:184px;background:#dadada"></div>
<div class="a" style="left:1210px;top:385px;width:1px;height:184px;background:#c5cdbd"></div>
<div class="t" style="left:1250.6px;top:182.6px;font-size:11.6px;color:#3a3a3a;transform:scaleX(0.95);transform-origin:0 0">11:...</div>
<div class="a" style="left:1245px;top:176px;width:1px;height:25px;background:#ababab"></div>
<div class="a" style="left:1245px;top:201px;width:1px;height:184px;background:#dadada"></div>
<div class="a" style="left:1245px;top:385px;width:1px;height:184px;background:#c5cdbd"></div>
<div class="a" style="left:400px;top:384px;width:881px;height:1px;background:#c4c4c4"></div>
<div class="a" style="left:425px;top:201px;width:36px;height:184px;background:#96c3e5;border-right:1px solid #7aabd4;border-bottom:1px solid #7aabd4"></div>
<div class="a" style="left:400px;top:385px;width:24px;height:184px;background:#eff7e7"></div>
<div class="a" style="left:424px;top:201px;width:1px;height:368px;background:#b0b0b0"></div>
<div class="t" style="left:388.2px;top:285.5px;width:52px;height:13px;font-size:11.8px;color:#333;transform:rotate(-90deg);text-align:center">SMT Area</div>
<div class="t" style="left:342.7px;top:470px;width:142px;height:13px;font-size:11.8px;color:#333;transform:rotate(-90deg);text-align:center">Mechanical Assembly Area</div>
<!-- inner v scrollbars -->
<div class="a" style="left:1265px;top:201px;width:16px;height:183px;background:#efefef"></div>
<div class="a" style="left:1265px;top:385px;width:16px;height:184px;background:#efefef"></div>
<div class="a" style="left:1281px;top:201px;width:16px;height:240px;background:#efefef"></div>
<div class="a" style="left:1281px;top:441px;width:16px;height:128px;background:#f5f5f5"></div>
<div class="a" style="left:1297px;top:201px;width:1px;height:384px;background:#a8a8a8"></div>
<div class="a" style="left:1281px;top:201px;width:1px;height:368px;background:#fff"></div>
<svg style="left:1265px;top:201px" width="33" height="368">
 <g fill="none" stroke="#c8c8c8" stroke-width="1.2">
  <path d="M4.5 11 L8 7.5 L11.5 11"/><path d="M4.5 173 L8 176.5 L11.5 173"/>
  <path d="M4.5 195 L8 191.5 L11.5 195"/><path d="M4.5 356 L8 359.5 L11.5 356"/>
  <path d="M20.5 11 L24 7.5 L27.5 11"/><path d="M20.5 229 L24 232.5 L27.5 229"/>
 </g>
 <g fill="#bdbdbd" transform="translate(-1265 -201)">
  <rect x="1285" y="445" width="8" height="1"/><path d="M1289 446 L1293 450 H1285 Z"/><path d="M1289 450 L1293 454 H1285 Z"/>
  <path d="M1289 461 L1293 465 H1285 Z"/><path d="M1289 465 L1293 469 H1285 Z"/>
  <path d="M1289 478.7 L1293 483 H1285 Z"/>
  <path d="M1289 499 L1293 494.8 H1285 Z"/>
  <path d="M1289 513 L1293 509 H1285 Z"/><path d="M1289 517 L1293 513 H1285 Z"/>
  <path d="M1289 528.7 L1293 524.7 H1285 Z"/><path d="M1289 532.7 L1293 528.7 H1285 Z"/><rect x="1285" y="533" width="8" height="1"/>
  <rect x="1288.2" y="541" width="1.6" height="8"/><rect x="1285" y="544.2" width="8" height="1.6"/>
 </g>
 <rect x="22.3" y="356" width="1.8" height="7" fill="#555"/>
</svg>
<!-- h scrollbar -->
<div class="a" style="left:425px;top:569px;width:872px;height:1px;background:#fff"></div>
<div class="a" style="left:425px;top:570px;width:872px;height:14px;background:#efefef"></div>
<div class="a" style="left:400px;top:569px;width:24px;height:15px;background:#eff7e7"></div>
<div class="a" style="left:400px;top:569px;width:24px;height:1px;background:#b8c0b0"></div>
<div class="a" style="left:794px;top:570px;width:117px;height:14px;background:#c1c1c1"></div>
<svg style="left:425px;top:570px" width="872" height="15">
 <path d="M11.5 3.5 L8 7 L11.5 10.5" fill="none" stroke="#555" stroke-width="1.5"/>
 <path d="M845.5 3.5 L849 7 L845.5 10.5" fill="none" stroke="#555" stroke-width="1.5"/>
</svg>


<!-- TABS -->
<div class="a" style="left:400px;top:614px;width:944px;height:201px;border:1px solid #ababab;background:#fff"></div>
<div class="a" style="left:515px;top:592px;width:108px;height:23px;border:1px solid #acacac;background:linear-gradient(#f0f0f0,#e5e5e5)"></div>
<div class="a" style="left:402px;top:590px;width:113px;height:26px;border:1px solid #acacac;border-bottom:none;background:#fff"></div>
<div class="t" style="left:411.30px;top:598.04px;font-size:12.0px;color:#333;transform:scaleX(0.962);transform-origin:0 0">Reserved Material</div>
<div class="t" style="left:523.10px;top:598.04px;font-size:12.0px;color:#333;transform:scaleX(0.956);transform-origin:0 0">Unavailable Parts</div>
<div class="a" style="left:403px;top:621px;width:938px;height:191px;border:1px solid #d0d0d0;background:#fff"></div>
<div class="a" style="left:404px;top:644px;width:936px;height:1px;background:#d8d8d8"></div>
<div class="a" style="left:552px;top:622px;width:1px;height:22px;background:#d8d8d8"></div>
<div class="a" style="left:889px;top:622px;width:1px;height:22px;background:#d8d8d8"></div>
<div class="a" style="left:1039px;top:622px;width:1px;height:22px;background:#d8d8d8"></div>
<div class="a" style="left:1189px;top:622px;width:1px;height:22px;background:#d8d8d8"></div>
<div class="t" style="left:407.30px;top:628.24px;font-size:12.0px;color:#222;transform:scaleX(0.986);transform-origin:0 0">Part Number</div>
<div class="t" style="left:557.00px;top:628.24px;font-size:12.0px;color:#222">P/N Description</div>
<div class="t" style="left:894.40px;top:628.24px;font-size:12.0px;color:#222;transform:scaleX(0.967);transform-origin:0 0">Reserved Quantity</div>
<div class="t" style="left:1044.00px;top:628.24px;font-size:12.0px;color:#222;transform:scaleX(0.980);transform-origin:0 0">Unit of Issue</div>
<div class="t" style="left:1194.40px;top:628.24px;font-size:12.0px;color:#222;transform:scaleX(0.954);transform-origin:0 0">Reel Count</div>

<!-- BUTTONS -->
<div class="a" style="left:399px;top:820px;width:81px;height:28px;border:1px solid #e6e6e6"></div>
<svg style="left:407px;top:826px" width="20" height="16"><path d="M1 8 L6.2 13.5 L16.5 2.5" fill="none" stroke="#c4c4c4" stroke-width="3.6"/></svg>
<div class="t" style="left:430.30px;top:828.84px;font-size:12.0px;color:#c4c4c4">Confirm</div>
<div class="a" style="left:1051px;top:820px;width:98px;height:28px;border:1px solid #e6e6e6"></div>
<svg style="left:1059px;top:826px" width="20" height="16"><path d="M1.5 8 L6.7 13.5 L17 2.5" fill="none" stroke="#c4c4c4" stroke-width="3.6"/></svg>
<div class="t" style="left:1083.00px;top:828.64px;font-size:12.0px;color:#c4c4c4">Confirm All</div>
<div class="a" style="left:1163px;top:820px;width:79px;height:28px;border:1px solid #e6e6e6"></div>
<svg style="left:1171px;top:826px" width="17" height="17">
 <path d="M1 1 H13 L16 4 V16 H1 Z" fill="#c4c4c4"/>
 <rect x="4" y="1" width="8" height="5" fill="#fff"/><rect x="9" y="1.8" width="2" height="3.4" fill="#c4c4c4"/>
 <rect x="3.5" y="9" width="10" height="5.5" fill="#fff"/>
</svg>
<div class="t" style="left:1193.70px;top:828.64px;font-size:12.0px;color:#c4c4c4;transform:scaleX(0.936);transform-origin:0 0">Save All</div>
<div class="a" style="left:1256px;top:825px;width:1px;height:18px;background:#9a9a9a"></div>
<div class="a" style="left:1271px;top:820px;width:73px;height:28px;border:1px solid #e6e6e6"></div>
<svg style="left:1278px;top:825px" width="19" height="19">
 <circle cx="9" cy="9" r="8.8" fill="#c4c4c4"/>
 <path d="M4.5 13.5 L13.5 4.5" stroke="#fff" stroke-width="2.2"/>
</svg>
<div class="t" style="left:1302.50px;top:828.64px;font-size:12.0px;color:#c4c4c4;transform:scaleX(0.912);transform-origin:0 0">Cancel</div>
<!-- splitter dots -->
<svg style="left:395px;top:445px" width="4" height="20"><g fill="#9a9a9a"><rect x="1" y="1" width="1" height="1"/><rect x="1" y="3" width="1" height="1"/><rect x="1" y="5" width="1" height="1"/><rect x="1" y="7" width="1" height="1"/><rect x="1" y="9" width="1" height="1"/><rect x="1" y="11" width="1" height="1"/><rect x="1" y="13" width="1" height="1"/><rect x="1" y="15" width="1" height="1"/></g></svg>

</body></html>
